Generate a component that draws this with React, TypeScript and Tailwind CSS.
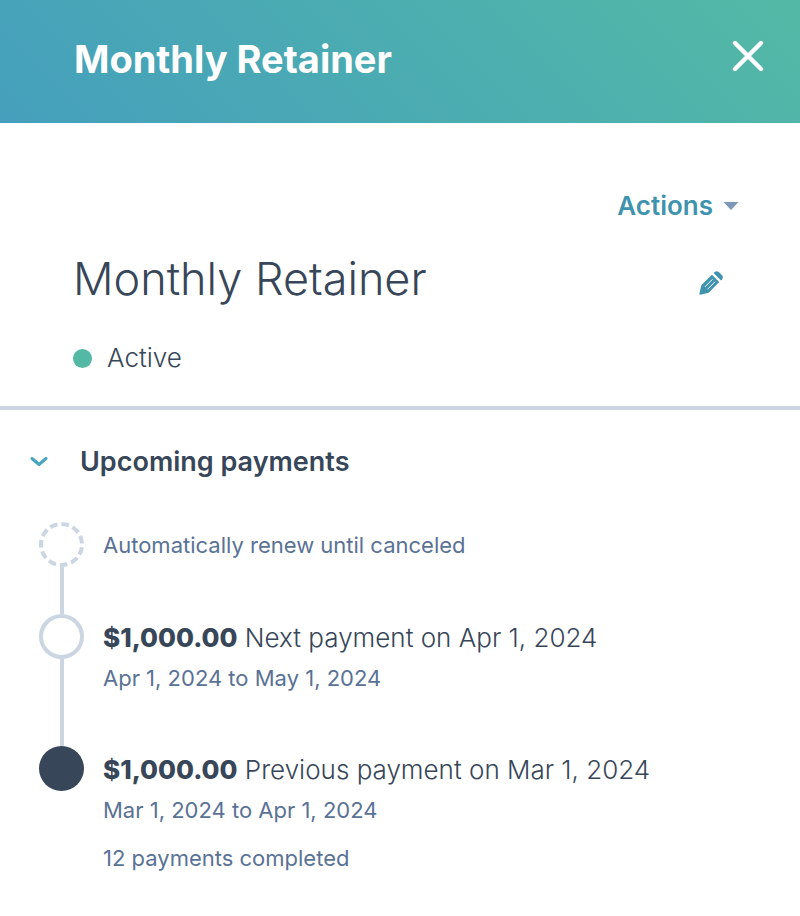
import type { ReactNode } from "react";

type MarkerKind = "pending" | "next" | "done";

interface TimelineEntry {
    id: string;
    marker: MarkerKind;
    amount?: string;
    label?: string;
    details: string[];
}

const ENTRIES: TimelineEntry[] = [
    {
        id: "renewal",
        marker: "pending",
        details: ["Automatically renew until canceled"],
    },
    {
        id: "next",
        marker: "next",
        amount: "$1,000.00",
        label: "Next payment on Apr 1, 2024",
        details: ["Apr 1, 2024 to May 1, 2024"],
    },
    {
        id: "previous",
        marker: "done",
        amount: "$1,000.00",
        label: "Previous payment on Mar 1, 2024",
        details: ["Mar 1, 2024 to Apr 1, 2024", "12 payments completed"],
    },
];

const MARKERS: Record<MarkerKind, ReactNode> = {
    pending: (
        <circle
            cx="22.5"
            cy="22.5"
            r="20.5"
            fill="none"
            stroke="#cbd6e2"
            strokeWidth="4"
            pathLength="110"
            strokeDasharray="6.6 3.4"
            strokeDashoffset="-2.4"
        />
    ),
    next: (
        <circle
            cx="22.5"
            cy="22.5"
            r="20.5"
            fill="#fff"
            stroke="#cbd6e2"
            strokeWidth="4"
        />
    ),
    done: <circle cx="22.5" cy="22.5" r="22.5" fill="#374659" />,
};

const PanelHeader = () => {
    return (
        <header className="flex items-center justify-between bg-linear-45 from-[#459fbc] to-[#53b9a5] pt-[30px] pr-8 pb-[34px] pl-[74px] text-white">
            <h1 className="text-[38px] leading-[59px] font-bold">
                Monthly Retainer
            </h1>
            <button type="button" aria-label="Close" className="pb-2">
                <svg
                    viewBox="0 0 40 40"
                    className="size-10"
                    fill="none"
                    stroke="currentColor"
                    strokeWidth="4.4"
                    strokeLinecap="round"
                >
                    <path d="M7 7l26 26M33 7L7 33" />
                </svg>
            </button>
        </header>
    );
};

const Summary = () => {
    return (
        <section className="border-b-4 border-[#cbd6e2] pt-[65px] pr-[61px] pb-6 pl-[73px]">
            <div className="flex justify-end">
                <button
                    type="button"
                    className="flex items-center gap-[10px] text-[26px] leading-[36px] font-semibold text-[#3f93ae]"
                >
                    Actions
                    <svg viewBox="0 0 16 8" className="h-2 w-4" fill="#7c98b6">
                        <path d="M0.5 0h15L8 8z" />
                    </svg>
                </button>
            </div>
            <div className="mt-[23px] flex items-center justify-between pr-4">
                <h2 className="text-[45px] leading-[64px] font-light">
                    Monthly Retainer
                </h2>
                <button type="button" aria-label="Edit name" className="pt-2">
                    <svg
                        viewBox="0 0 24 24"
                        className="size-6"
                        fill="#3f93ae"
                    >
                        <path d="M1.2 23.8Q0.2 23.8 0.4 22.8L2 15.4Q2.2 14.4 2.8 13.8L13 3.8 20.2 11 10.2 21.2Q9.6 21.8 8.6 22.1Z" />
                        <path d="M14.6 2L15.8 0.9Q17.8 -0.6 19.8 1L23 4.2Q24.6 6.2 23.1 8.2L22 9.4Z" />
                        <path
                            d="M6.2 15.6L13.2 8.6M8.8 18L15.8 11"
                            stroke="#fff"
                            strokeWidth="1"
                            strokeLinecap="round"
                        />
                    </svg>
                </button>
            </div>
            <p className="mt-[23px] flex items-center gap-[15px] text-[26px] leading-[48px] font-light">
                <span className="size-[19px] rounded-full bg-[#53b9a5]" />
                Active
            </p>
        </section>
    );
};

const TimelineItem = ({
    entry,
    isLast,
}: {
    entry: TimelineEntry;
    isLast: boolean;
}) => {
    return (
        <li className="flex gap-[19px]">
            <div className="flex flex-col items-center">
                <svg viewBox="0 0 45 45" className="size-[45px] shrink-0">
                    {MARKERS[entry.marker]}
                </svg>
                {!isLast && <span className="w-1 flex-1 bg-[#cbd6e2]" />}
            </div>
            <div className={entry.amount ? "pb-[52px]" : "pb-[46px]"}>
                {entry.amount && (
                    <p className="text-[26px] leading-[48px] font-light">
                        <strong className="font-extrabold">
                            {entry.amount}
                        </strong>{" "}
                        {entry.label}
                    </p>
                )}
                <div className="flex flex-col gap-4 text-[22px] text-[#5a7295]">
                    {entry.details.map((detail) => (
                        <p
                            key={detail}
                            className={
                                entry.amount
                                    ? "leading-[32px]"
                                    : "leading-[46px]"
                            }
                        >
                            {detail}
                        </p>
                    ))}
                </div>
            </div>
        </li>
    );
};

const App = () => {
    return (
        <main className="min-h-screen bg-white font-['Inter',sans-serif] text-[#374659]">
            <PanelHeader />
            <Summary />
            <section className="px-[30px] pt-8">
                <h3>
                    <button
                        type="button"
                        aria-expanded="true"
                        className="flex items-center gap-8 text-[27px] leading-[40px] font-semibold"
                    >
                        <svg
                            viewBox="0 0 18 10"
                            className="h-[10px] w-[18px]"
                            fill="none"
                            stroke="#45a5bf"
                            strokeWidth="3"
                            strokeLinecap="round"
                            strokeLinejoin="round"
                        >
                            <path d="M2 1.5l7 6 7-6" />
                        </svg>
                        Upcoming payments
                    </button>
                </h3>
                <ol className="mt-10 pl-[9px]">
                    {ENTRIES.map((entry, index) => (
                        <TimelineItem
                            key={entry.id}
                            entry={entry}
                            isLast={index === ENTRIES.length - 1}
                        />
                    ))}
                </ol>
            </section>
        </main>
    );
};

export default App;
